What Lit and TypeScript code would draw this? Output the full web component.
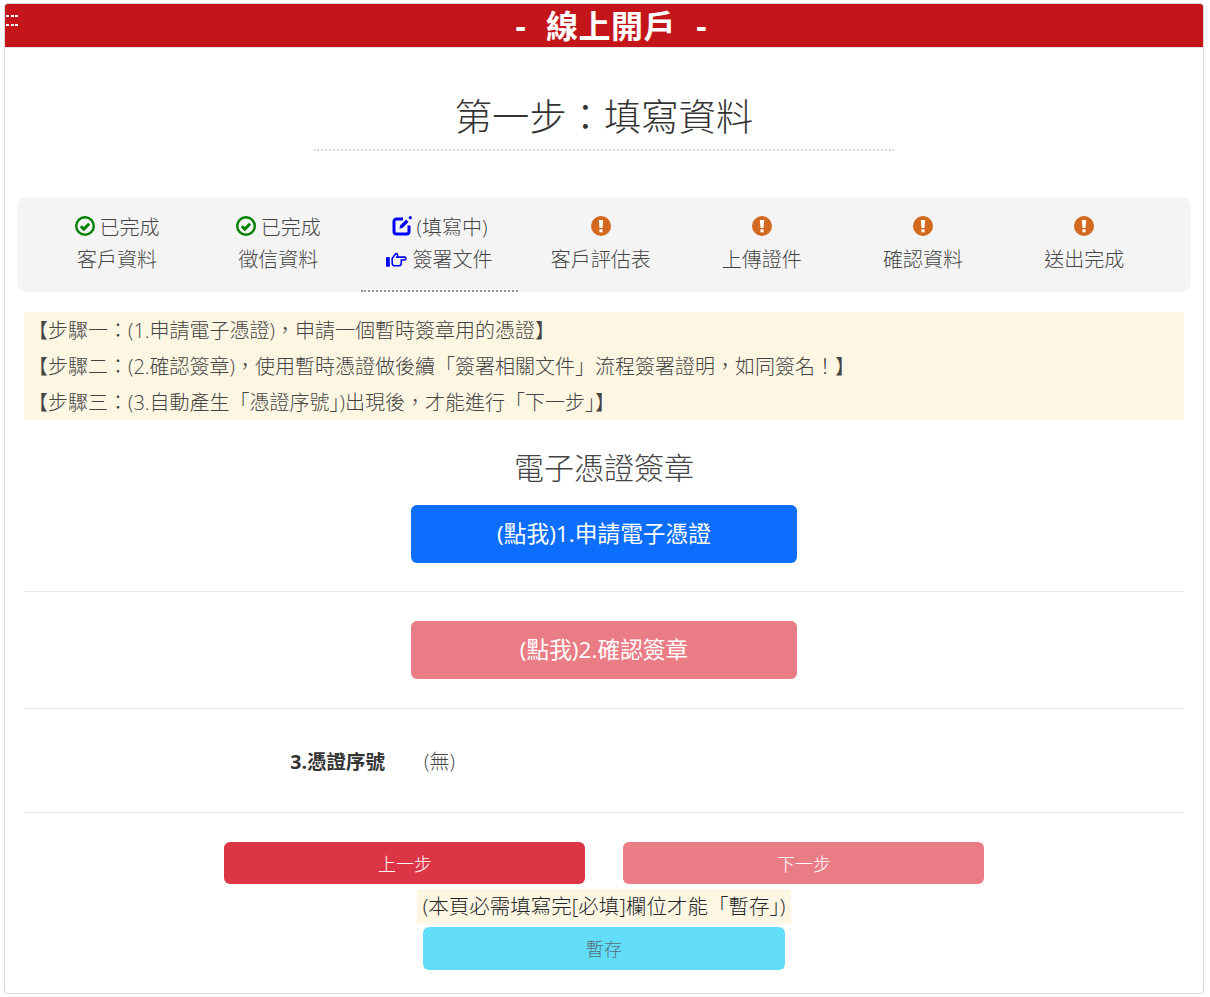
import { LitElement, html, css } from "lit";
import { customElement } from "lit/decorators.js";

const check = html`<svg class="ic" viewBox="0 0 20 20" width="20" height="20"><circle cx="10" cy="10" r="8.800" fill="none" stroke="#008000" stroke-width="2.400"/><path d="M5.800 10.200l3 2.900 5.400-5.400" fill="none" stroke="#008000" stroke-width="2.900"/></svg>`;
const warn = html`<svg class="ic" viewBox="0 0 20 20" width="20" height="20"><circle cx="10" cy="10" r="10" fill="#d2691e"/><path d="M7.800 4h4.400l-.7 8h-3z" fill="#fff"/><rect x="8.400" y="13.300" width="3.200" height="3" fill="#fff"/></svg>`;
const edit = html`<svg class="ic" viewBox="0 0 20 20" width="20" height="20"><path d="M11 3H4.500A2.500 2.500 0 0 0 2 5.500v10A2.500 2.500 0 0 0 4.500 18h10a2.500 2.500 0 0 0 2.500-2.500V9.500" fill="none" stroke="#0000ff" stroke-width="3"/><path d="M7.500 12.500l.6-3 6-6 2.400 2.400-6 6z" fill="#0000ff"/><circle cx="18.300" cy="1.700" r="1.600" fill="#0000ff"/></svg>`;
const hand = html`<svg class="ic" viewBox="0 0 22 18" width="21" height="18"><rect x="0" y="6" width="4" height="10" fill="#0000ff"/><path d="M6.500 7.500l3.500-5c1.300-.8 2.600.2 2 1.800l-.7 1.700h8.200c1.800 0 1.800 3 0 3h-3.500v3.500c0 1.500-1 2.500-2.500 2.500H9c-1.500 0-2.500-1-2.500-2.500z" fill="none" stroke="#0000ff" stroke-width="1.700"/></svg>`;

const steps = [
  { top: "已完成", icon: check, name: "客戶資料" },
  { top: "已完成", icon: check, name: "徵信資料" },
  { top: "(填寫中)", icon: edit, name: "簽署文件", active: true },
  { top: "", icon: warn, name: "客戶評估表" },
  { top: "", icon: warn, name: "上傳證件" },
  { top: "", icon: warn, name: "確認資料" },
  { top: "", icon: warn, name: "送出完成" },
];

@customElement("app-root")
export class AppRoot extends LitElement {
  static styles = css`
    :host { display: block; height: 997px; padding: 3px 6px 0 4px; box-sizing: border-box; background: #fff;
      font-family: "Open Sans", "Noto Sans CJK TC", sans-serif; color: #444; font-weight: 300; }
    * { box-sizing: border-box; }
    .card { height: 991px; border: 1px solid #d9d9d9; border-radius: 4px; background: #fff; overflow: hidden; }
    .bar { position: relative; height: 44px; background: #c4161a; color: #fff; text-align: center; padding-left: 14px;
      font-size: 32px; font-weight: 700; line-height: 44px; border-bottom: 1px solid #e6e6e6; white-space: pre; word-spacing: 1.750px; }
    .bar .t { letter-spacing: 0.500px; }
    .grip { position: absolute; left: 1px; top: 11px; width: 13px; height: 11px; display: grid;
      grid-template-columns: repeat(3, 3px); grid-auto-rows: 2px; gap: 7px 1.500px; }
    .grip i { display: block; width: 3px; height: 2px; background: #fff; }
    .title { margin: 0 auto; width: 580px; height: 103px; padding-top: 41px; text-align: center; font-size: 37.300px;
      line-height: 56px; font-weight: 300; color: #333; border-bottom: 2px dotted #ddd; white-space: nowrap; }
    .steps { margin: 46px 12px 0; height: 95px; background: #f4f4f4; border-radius: 9px; padding: 15px 0 0 19.500px;
      display: grid; grid-template-columns: repeat(7, 161.200px); position: relative; }
    .step { text-align: center; font-size: 20px; line-height: 32px; height: 80px; color: #444; white-space: nowrap; position: relative; }
    .step div { height: 32px; display: flex; justify-content: center; align-items: center; gap: 5px; }
    .step .ic { margin-top: -4px; }
    .step .row2 .ic { margin-top: -1px; }
    .step.active::after { content: ""; position: absolute; left: 2.500px; right: 2.500px; bottom: 0; border-bottom: 2px dotted #999; }
    .ic { display: block; flex: none; }
    .body { margin: 20px 19px 0; }
    .tips { background: #fdf6e3; padding: 1px 0 0 4px; font-size: 20px; line-height: 36px; color: #444; height: 108px; white-space: nowrap; }
    h2 { margin: 24px 0 0; height: 50px; text-align: center; font-size: 30px; font-weight: 300; line-height: 47px; color: #444; }
    .btn { display: block; border: 0; color: #fff; text-align: center; border-radius: 6px; font-family: inherit; font-weight: 300; padding: 0; }
    .big { width: 386px; height: 58px; margin: 11px auto 0; font-size: 22.700px; line-height: 57px; font-weight: 400; }
    .blue { background: #0d6efd; }
    .pink { background: #ea7c86; }
    .red { background: #dc3545; }
    .big.pink { margin-top: 29px; }
    hr { margin: 28px 0 0; border: 0; border-top: 1px solid #e9e9e9; height: 0; }
    hr.wide { margin-top: 29px; }
    hr.flush { margin-top: 0; }
    .serial { height: 103px; display: flex; align-items: center; font-size: 20px; }
    .serial b { width: 361px; text-align: right; font-size: 19.500px; font-weight: 700; color: #333; }
    .serial span { margin-left: 39px; }
    .nav { margin-top: 29px; display: flex; justify-content: center; gap: 38px; }
    .nav .btn { width: 361px; height: 42px; line-height: 44px; font-size: 18px; padding-left: 1px; }
    .note { width: 374px; height: 35px; margin: 5px auto 0; background: #fdf6e3; text-align: center; font-size: 20.500px; line-height: 35px; color: #212529; white-space: nowrap; }
    .save { width: 362px; height: 43px; margin: 3px auto 0; background: #61ddf7; color: #57707a; font-size: 18px; line-height: 44px; }
  `;

  render() {
    return html`<div class="card">
      <div class="bar"><span class="grip">${Array.from({ length: 6 }, () => html`<i></i>`)}</span>-  <span class="t">線上開戶</span>  -</div>
      <div class="title">第一步：填寫資料</div>
      <div class="steps">
        ${steps.map(
          (s) => html`<div class="step ${s.active ? "active" : ""}">
            <div>${s.icon}${s.top}</div>
            <div class="row2">${s.active ? hand : ""}${s.name}</div>
          </div>`
        )}
      </div>
      <div class="body">
        <div class="tips">
          <div>【步驟一：(1.申請電子憑證)，申請一個暫時簽章用的憑證】</div>
          <div>【步驟二：(2.確認簽章)，使用暫時憑證做後續「簽署相關文件」流程簽署證明，如同簽名！】</div>
          <div>【步驟三：(3.自動產生「憑證序號」)出現後，才能進行「下一步」】</div>
        </div>
        <h2>電子憑證簽章</h2>
        <div class="btn big blue">(點我)1.申請電子憑證</div>
        <hr />
        <div class="btn big pink">(點我)2.確認簽章</div>
        <hr class="wide" />
        <div class="serial"><b>3.憑證序號</b><span>(無)</span></div>
        <hr class="flush" />
        <div class="nav"><div class="btn red">上一步</div><div class="btn pink">下一步</div></div>
        <div class="note">(本頁必需填寫完[必填]欄位才能「暫存」)</div>
        <div class="btn save">暫存</div>
      </div>
    </div>`;
  }
}
